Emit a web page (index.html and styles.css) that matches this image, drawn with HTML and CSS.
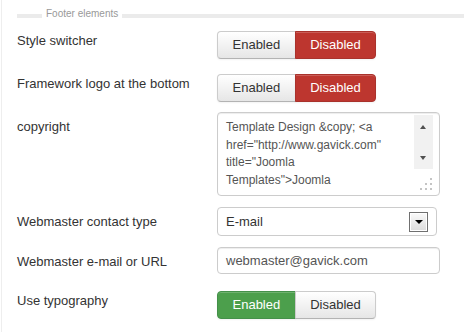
FILE: index.html
```html
<!doctype html>
<html lang="en">

<head>
    <meta charset="utf-8">
    <link rel="stylesheet" href="styles.css">
</head>

<body>
    <div class="fieldset">
        <div class="legend">
            <span class="legend-line legend-start"></span>
            <span class="legend-text">Footer elements</span>
            <span class="legend-line"></span>
        </div>

        <div class="row row-toggle gap-15">
            <div class="label">Style switcher</div>
            <div class="btn-group">
                <span class="btn">Enabled</span>
                <span class="btn btn-danger">Disabled</span>
            </div>
        </div>

        <div class="row row-toggle gap-10">
            <div class="label">Framework logo at the bottom</div>
            <div class="btn-group">
                <span class="btn">Enabled</span>
                <span class="btn btn-danger">Disabled</span>
            </div>
        </div>

        <div class="row row-input gap-11">
            <div class="label">copyright</div>
            <div class="textarea">
                <div class="textarea-text">
                    <span>Template Design &amp;copy; &lt;a</span>
                    <span>href="http://www.gavick.com"</span>
                    <span>title="Joomla</span>
                    <span>Templates"&gt;Joomla</span>
                </div>
                <div class="scrollbar">
                    <span class="arrow-up"></span>
                    <span class="arrow-down"></span>
                </div>
                <div class="grip">
                    <i></i><i></i><i></i><i></i><i></i><i></i>
                </div>
            </div>
        </div>

        <div class="row row-input gap-11">
            <div class="label">Webmaster contact type</div>
            <div class="select">
                <span>E-mail</span>
                <span class="select-arrow"><span class="caret"></span></span>
            </div>
        </div>

        <div class="row row-input gap-17">
            <div class="label">Webmaster e-mail or URL</div>
            <div class="input">webmaster@gavick.com</div>
        </div>

        <div class="row row-toggle">
            <div class="label">Use typography</div>
            <div class="btn-group">
                <span class="btn btn-success">Enabled</span>
                <span class="btn">Disabled</span>
            </div>
        </div>
    </div>
</body>

</html>
```

FILE: styles.css
```css
* {
    box-sizing: border-box;
}

html,
body {
    margin: 0;
    padding: 0;
    background: #fff;
}

body {
    font-family: "Liberation Sans", Arial, sans-serif;
    font-size: 13px;
    line-height: 18px;
    color: #333;
}

.fieldset {
    margin-left: 1px;
    border-left: 1px solid #eee;
    padding: 6px 0 0 15px;
    min-height: 332px;
}

/* legend */
.legend {
    display: flex;
    align-items: center;
    height: 16px;
    margin-bottom: 9px;
}

.legend-line {
    flex: 1;
    height: 4px;
    margin-top: 4px;
    background: #ebebeb;
}

.legend-start {
    flex: 0 0 25px;
}

.legend-text {
    font-size: 10px;
    line-height: 12px;
    color: #999;
    padding: 0 4px;
}

/* rows */
.row {
    display: grid;
    grid-template-columns: 200px auto;
    align-items: start;
}

.row-toggle .label {
    padding-top: 1px;
}

.row-input .label {
    padding-top: 6px;
}

.gap-10 { margin-bottom: 10px; }
.gap-11 { margin-bottom: 11px; }
.gap-15 { margin-bottom: 15px; }
.gap-17 { margin-bottom: 17px; }

/* buttons */
.btn-group {
    display: flex;
}

.btn {
    display: block;
    padding: 4px 14.5px;
    line-height: 18px;
    color: #333;
    background: linear-gradient(#fff, #e6e6e6);
    border: 1px solid #ccc;
    border-bottom-color: #b3b3b3;
    box-shadow: inset 0 1px 0 rgba(255, 255, 255, .2), 0 1px 2px rgba(0, 0, 0, .05);
}

.btn:first-child {
    border-radius: 4px 0 0 4px;
}

.btn:last-child {
    margin-left: -1px;
    border-radius: 0 4px 4px 0;
}

.btn-danger {
    color: #fff;
    background: #bd362f;
    border-color: #a9322c;
}

.btn-success {
    color: #fff;
    background: #4c9f4c;
    border-color: #44904a;
}

/* textarea */
.textarea {
    position: relative;
    display: flex;
    width: 223px;
    height: 84px;
    border: 1px solid #ccc;
    border-radius: 4px;
    box-shadow: inset 0 1px 1px rgba(0, 0, 0, .075);
    color: #555;
}

.textarea-text {
    flex: 1;
    padding: 6px 0 0 8px;
    font-size: 12px;
    line-height: 17.5px;
}

.textarea-text span {
    display: block;
    white-space: nowrap;
}

.scrollbar {
    position: relative;
    width: 19px;
    height: 54px;
    margin: 2px 6px 0 0;
    background: #f1f1f1;
}

.arrow-up,
.arrow-down {
    position: absolute;
    left: 6px;
    width: 0;
    height: 0;
    border-left: 3.5px solid transparent;
    border-right: 3.5px solid transparent;
}

.arrow-up {
    top: 10px;
    border-bottom: 4px solid #505050;
}

.arrow-down {
    bottom: 9px;
    border-top: 4px solid #505050;
}

.grip {
    position: absolute;
    right: 7px;
    bottom: 5px;
    display: grid;
    grid-template-columns: repeat(3, 2px);
    grid-template-rows: repeat(3, 2px);
    gap: 3px;
}

.grip i {
    display: block;
    background: #c4c4c4;
}

.grip i:nth-child(1) { grid-area: 1 / 3; }
.grip i:nth-child(2) { grid-area: 2 / 2; }
.grip i:nth-child(3) { grid-area: 2 / 3; }
.grip i:nth-child(4) { grid-area: 3 / 1; }
.grip i:nth-child(5) { grid-area: 3 / 2; }
.grip i:nth-child(6) { grid-area: 3 / 3; }

/* select */
.select {
    display: flex;
    align-items: center;
    justify-content: space-between;
    width: 220px;
    height: 29px;
    padding: 0 8px 0 8px;
    border: 1px solid #ccc;
    border-radius: 4px;
    color: #333;
}

.select-arrow {
    display: flex;
    align-items: center;
    justify-content: center;
    width: 19px;
    height: 20px;
    border: 1px solid #707070;
    background: linear-gradient(#fafafa, #dcdcdc);
    box-shadow: inset 0 0 0 1px #fff;
}

.caret {
    width: 0;
    height: 0;
    border-left: 4px solid transparent;
    border-right: 4px solid transparent;
    border-top: 4px solid #000;
}

/* text input */
.input {
    width: 223px;
    height: 27px;
    padding: 4px 8px;
    border: 1px solid #ccc;
    border-radius: 4px;
    box-shadow: inset 0 1px 1px rgba(0, 0, 0, .075);
    color: #555;
}
```
